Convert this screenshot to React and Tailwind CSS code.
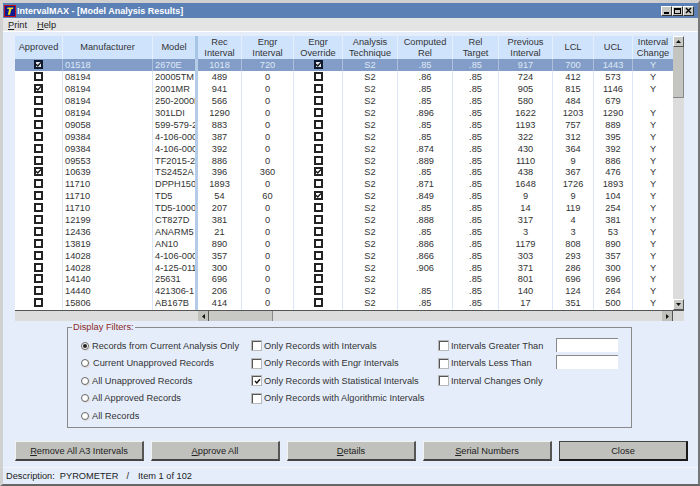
import React from "react";

const rows = [
  ["1", "01518", "2670E", "1018", "720", "1", "S2", ".85", ".85", "917", "700", "1443", "Y"],
  ["0", "08194", "20005TM", "489", "0", "0", "S2", ".86", ".85", "724", "412", "573", "Y"],
  ["1", "08194", "2001MR", "941", "0", "0", "S2", ".85", ".85", "905", "815", "1146", "Y"],
  ["0", "08194", "250-2000F", "566", "0", "0", "S2", ".85", ".85", "580", "484", "679", ""],
  ["0", "08194", "301LDI", "1290", "0", "0", "S2", ".896", ".85", "1622", "1203", "1290", "Y"],
  ["0", "09058", "599-579-2", "883", "0", "0", "S2", ".85", ".85", "1193", "757", "889", "Y"],
  ["0", "09384", "4-106-000", "387", "0", "0", "S2", ".85", ".85", "322", "312", "395", "Y"],
  ["0", "09384", "4-106-000", "392", "0", "0", "S2", ".874", ".85", "430", "364", "392", "Y"],
  ["0", "09553", "TF2015-2", "886", "0", "0", "S2", ".889", ".85", "1110", "9", "886", "Y"],
  ["1", "10639", "TS2452A", "396", "360", "1", "S2", ".85", ".85", "438", "367", "476", "Y"],
  ["0", "11710", "DPPH150", "1893", "0", "0", "S2", ".871", ".85", "1648", "1726", "1893", "Y"],
  ["0", "11710", "TD5", "54", "60", "1", "S2", ".849", ".85", "9", "9", "104", "Y"],
  ["0", "11710", "TD5-1000", "207", "0", "0", "S2", ".85", ".85", "14", "119", "254", "Y"],
  ["0", "12199", "CT827D", "381", "0", "0", "S2", ".888", ".85", "317", "4", "381", "Y"],
  ["0", "12436", "ANARM5", "21", "0", "0", "S2", ".85", ".85", "3", "3", "53", "Y"],
  ["0", "13819", "AN10", "890", "0", "0", "S2", ".886", ".85", "1179", "808", "890", "Y"],
  ["0", "14028", "4-106-000", "357", "0", "0", "S2", ".866", ".85", "303", "293", "357", "Y"],
  ["0", "14028", "4-125-011", "300", "0", "0", "S2", ".906", ".85", "371", "286", "300", "Y"],
  ["0", "14140", "25631", "696", "0", "0", "S2", "", ".85", "801", "696", "696", "Y"],
  ["0", "14440", "421306-1", "206", "0", "0", "S2", ".85", ".85", "140", "124", "264", "Y"],
  ["0", "15806", "AB167B", "414", "0", "0", "S2", ".85", ".85", "17", "351", "500", "Y"],
  ["0", "", "", "", "", "0", "", "", "", "", "", "", ""],
];

const headers = [
  ["Approved"],
  ["Manufacturer"],
  ["Model"],
  ["Rec", "Interval"],
  ["Engr", "Interval"],
  ["Engr", "Override"],
  ["Analysis", "Technique"],
  ["Computed", "Rel"],
  ["Rel", "Target"],
  ["Previous", "Interval"],
  ["LCL"],
  ["UCL"],
  ["Interval", "Change"],
];

const gridCols = "grid grid-cols-[48px_90px_45px_44px_52px_49px_55px_55px_46px_54px_41px_39px_41px]";

const GridCheck = ({ on, light }) => (
  <span className={`flex h-[9px] w-[9px] shrink-0 items-center justify-center border-2 ${light ? "border-[#10182c] bg-[#dfe6f2]" : "border-[#222] bg-white"}`}>
    {on && (
      <svg width="7" height="7" viewBox="0 0 7 7" className="shrink-0">
        <path d="M1 3.2 L2.8 5 L6 1.4" fill="none" stroke="#111" strokeWidth="1.4" />
      </svg>
    )}
  </span>
);

const Check = ({ on, label }) => (
  <div className="flex h-[17.5px] items-center">
    <span className="flex h-[9px] w-[9px] shrink-0 items-center justify-center border-t border-l border-[#555] border-b-white border-r-white bg-white shadow-[0_0_0_1px_#b8b8b8]">
      {on && (
        <svg width="7" height="7" viewBox="0 0 7 7" className="shrink-0">
          <path d="M1 3 L2.8 5 L6 1.2" fill="none" stroke="#111" strokeWidth="1.4" />
        </svg>
      )}
    </span>
    <span className="ml-[3px] whitespace-nowrap">{label}</span>
  </div>
);

const Radio = ({ on, label, gap }) => (
  <div className="flex h-[17.5px] items-center">
    <span className="flex h-[8px] w-[8px] shrink-0 items-center justify-center rounded-full border border-[#666] bg-white shadow-[1px_1px_0_#ddd]">
      {on && <span className="h-[4px] w-[4px] rounded-full bg-[#222]" />}
    </span>
    <span className={`whitespace-nowrap ${gap}`}>{label}</span>
  </div>
);

const Button = ({ ul, rest, strong }) => (
  <button className={`h-[20px] w-[129px] bg-[#c0c0bc] pt-[1px] text-[#222] ${strong ? "border border-r-2 border-b-2 border-[#1a1a1a] border-t-[#444] border-l-[#444]" : "border-t border-l border-t-[#f2f2f2] border-l-[#f2f2f2] border-r-2 border-b-2 border-r-[#555] border-b-[#444]"}`}>
    {ul && <span className="underline">{ul}</span>}
    {rest}
  </button>
);

const WinBtn = ({ children }) => (
  <span className="flex h-[10px] w-[11px] items-center justify-center border-t border-l border-r border-b border-t-white border-l-white border-r-[#333] border-b-[#333] bg-[#c8c8c4]">
    {children}
  </span>
);

const Arrow = ({ d }) => (
  <svg width="5" height="5" viewBox="0 0 5 5">
    <path d={d} fill="#111" />
  </svg>
);

export default function App() {
  return (
    <div
      className="flex h-[486px] w-[700px] flex-col overflow-hidden border-r-2 border-b-2 border-t-[3px] border-l-[3px] border-t-[#d0d0d0] border-l-[#d0d0d0] border-r-[#777] border-b-[#666] bg-[#e5edfb] text-[9.25px] leading-[12px] text-[#333]"
      style={{ fontFamily: '"Liberation Sans", Arial, sans-serif' }}
    >
      {/* Title bar */}
      <div className="flex h-[15px] shrink-0 items-center bg-[#5a80b6] pr-[4px] pl-[1px]">
        <svg width="12" height="12" viewBox="0 0 12 12" className="shrink-0">
          <rect width="12" height="12" fill="#c01020" />
          <rect x="1" y="1" width="10" height="10" fill="#101890" />
          <path d="M3.5 2.5 H9.5 L9 4 H7.4 L6 9.8 H3.8 L5.2 4 H3.1 Z" fill="#f4e020" />
        </svg>
        <span className="ml-[1px] text-[9px] font-bold text-white">IntervalMAX - [Model Analysis Results]</span>
        <div className="ml-auto flex">
          <WinBtn>
            <span className="mt-[5px] h-[2px] w-[5px] bg-black" />
          </WinBtn>
          <WinBtn>
            <span className="h-[6px] w-[7px] border border-t-2 border-black" />
          </WinBtn>
          <WinBtn>
            <svg width="7" height="7" viewBox="0 0 7 7">
              <path d="M1 1 L6 6 M6 1 L1 6" stroke="#000" strokeWidth="1.4" />
            </svg>
          </WinBtn>
        </div>
      </div>

      {/* Menu */}
      <div className="flex h-[13px] shrink-0 items-center gap-[10px] bg-[#e4e4e4] pl-[5px] text-[#222]">
        <span><span className="underline">P</span>rint</span>
        <span><span className="underline">H</span>elp</span>
      </div>

      <div className="flex min-h-0 flex-1 flex-col border-t border-t-white pt-[4px] pl-[12px]">
        {/* Grid */}
        <div className="relative h-[285px] w-[669px] shrink-0 overflow-hidden">
          <div className={`${gridCols} h-[23px] bg-[#cfe3fd] text-center leading-[11px]`}>
            {headers.map((h, i) => (
              <div
                key={i}
                className={`flex flex-col items-center justify-center whitespace-nowrap border-r ${i === 2 ? "border-r-[3px] border-r-[#a8c4e4]" : "border-r-[#e5effd]"}`}
              >
                {h.map((t) => (
                  <span key={t}>{t}</span>
                ))}
              </div>
            ))}
          </div>
          <div className="h-[251px] w-[659px] overflow-hidden bg-white">
            {rows.map((r, ri) => {
              const sel = ri === 0;
              return (
                <div key={ri} className={`${gridCols} h-[11.9px] ${sel ? "bg-[#829dc8] text-[#dfe8f6]" : ""}`}>
                  {r.map((c, i) => {
                    const box = i === 0 || i === 5;
                    const left = i === 1 || i === 2;
                    return (
                      <div
                        key={i}
                        className={`flex items-center overflow-hidden whitespace-nowrap border-r ${box ? "" : "pt-[1px]"} ${left ? "pl-[2px]" : "justify-center"} ${i === 2 ? "border-r-[3px] border-r-[#b4cce8]" : sel ? "border-r-[#aebfdc]" : "border-r-[#dde6f8]"} ${box ? "justify-center" : ""}`}
                      >
                        {box ? <GridCheck on={c === "1"} light={sel} /> : c}
                      </div>
                    );
                  })}
                </div>
              );
            })}
          </div>

          {/* Vertical scrollbar */}
          <div className="absolute top-0 right-0 flex h-[274px] w-[11px] flex-col bg-[#dcdcdc]">
            <div className="flex h-[11px] w-[11px] items-center justify-center border-t border-l border-r border-b border-t-white border-l-white border-r-[#555] border-b-[#555] bg-[#c8c8c4]">
              <Arrow d="M2.5 1 L5 4 H0 Z" />
            </div>
            <div className="h-[51px] w-[11px] border-r border-b border-r-[#888] border-b-[#888] bg-[#c4c4c0]" />
            <div className="flex-1" />
            <div className="flex h-[11px] w-[11px] items-center justify-center border-t border-l border-r border-b border-t-white border-l-white border-r-[#555] border-b-[#555] bg-[#c8c8c4]">
              <Arrow d="M0 1 H5 L2.5 4 Z" />
            </div>
          </div>

          {/* Horizontal scrollbar */}
          <div className="absolute bottom-0 left-0 flex h-[11px] w-[669px] border-t border-t-[#555] bg-[#dcdcdc]">
            <div className="w-[183px]" />
            <div className="flex h-[11px] w-[11px] items-center justify-center border-r border-b border-r-[#555] border-b-[#555] bg-[#c0c0bc]">
              <Arrow d="M1 2.5 L4 0 V5 Z" />
            </div>
            <div className="h-[11px] w-[64px] border-r border-b border-r-[#888] border-b-[#888] bg-[#c8c8c4]" />
            <div className="flex-1" />
            <div className="mr-[11px] flex h-[11px] w-[11px] items-center justify-center border-r border-b border-r-[#555] border-b-[#555] bg-[#c0c0bc]">
              <Arrow d="M4 2.5 L1 0 V5 Z" />
            </div>
          </div>
        </div>

        {/* Display filters */}
        <div className="relative mt-[6px] ml-[52px] h-[101px] w-[565px] shrink-0 border border-[#8a8a8a]">
          <span className="absolute -top-[7px] left-[4px] bg-[#e5edfb] px-[1px] text-[#8a2a2a]">Display Filters:</span>
          <div className="flex pt-[9px]">
            <div className="ml-[13px] w-[171px]">
              <Radio on label="Records from Current Analysis Only" gap="ml-[3px]" />
              <Radio label="Current Unapproved Records" gap="ml-[4px]" />
              <Radio label="All Unapproved Records" gap="ml-[3px]" />
              <Radio label="All Approved Records" gap="ml-[3px]" />
              <Radio label="All Records" gap="ml-[3px]" />
            </div>
            <div className="w-[187px]">
              <Check label="Only Records with Intervals" />
              <Check label="Only Records with Engr Intervals" />
              <Check on label="Only Records with Statistical Intervals" />
              <Check label="Only Records with Algorithmic Intervals" />
            </div>
            <div className="w-[117px]">
              <Check label="Intervals Greater Than" />
              <Check label="Intervals Less Than" />
              <Check label="Interval Changes Only" />
            </div>
            <div className="flex flex-col gap-[3px] pt-[1px]">
              <div className="h-[14px] w-[62px] border-t border-l border-t-[#888] border-l-[#888] bg-white" />
              <div className="h-[14px] w-[62px] border-t border-l border-t-[#888] border-l-[#888] bg-white" />
            </div>
          </div>
        </div>

        {/* Buttons */}
        <div className="mt-[13px] flex shrink-0 gap-[7px]">
          <Button ul="R" rest="emove All A3 Intervals" />
          <Button ul="A" rest="pprove All" />
          <Button ul="D" rest="etails" />
          <Button ul="S" rest="erial Numbers" />
          <Button rest="Close" strong />
        </div>

        {/* Status */}
        <div className="-ml-[12px] mt-[6px] flex h-[18px] items-center border-t border-t-[#f4f6fb] pl-[3px] text-[#222]">
          <span>Description:</span>
          <span className="ml-[5px]">PYROMETER</span>
          <span className="ml-[8px]">/</span>
          <span className="ml-[9px]">Item 1 of 102</span>
        </div>
      </div>
    </div>
  );
}
